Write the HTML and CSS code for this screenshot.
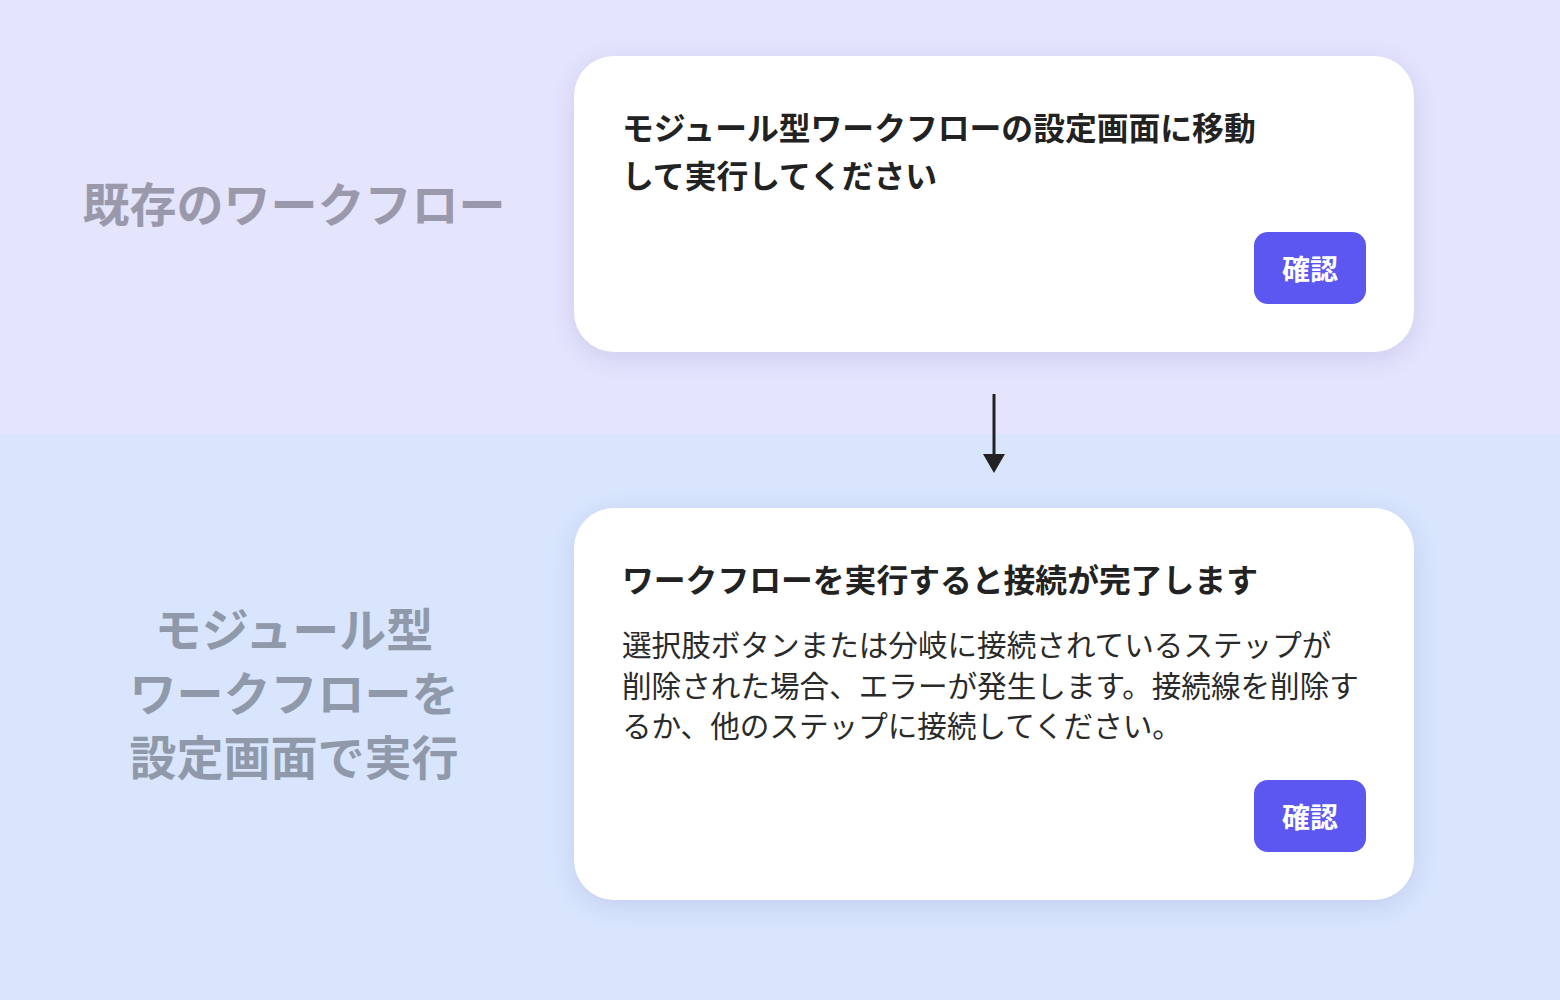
FILE: index.html
```html
<!DOCTYPE html>
<html lang="ja">
<head>
<meta charset="utf-8">
<title>ワークフロー</title>
<link rel="stylesheet" href="styles.css">
</head>
<body>
<main class="page">
  <section class="row">
    <div class="label label-top">既存のワークフロー</div>
    <div class="card">
      <h2 class="card-title">モジュール型ワークフローの設定画面に移動<br>して実行してください</h2>
      <div class="actions"><button class="btn">確認</button></div>
    </div>
  </section>
  <div class="arrow-row">
    <svg class="arrow" width="24" height="80" viewBox="0 0 24 80">
      <line x1="12" y1="0" x2="12" y2="64" stroke="#222" stroke-width="3"/>
      <polygon points="1,60 23,60 12,79" fill="#222"/>
    </svg>
  </div>
  <section class="row row-2">
    <div class="label label-bottom">モジュール型<br>ワークフローを<br>設定画面で実行</div>
    <div class="card">
      <h2 class="card-title">ワークフローを実行すると接続が完了します</h2>
      <p class="card-body">選択肢ボタンまたは分岐に接続されているステップが<br>削除された場合、エラーが発生します。接続線を削除す<br>るか、他のステップに接続してください。</p>
      <div class="actions"><button class="btn">確認</button></div>
    </div>
  </section>
</main>
</body>
</html>
```
FILE: styles.css
```css
* { box-sizing: border-box; }
html, body { margin: 0; padding: 0; }
body {
  width: 1560px;
  height: 1000px;
  overflow: hidden;
  font-family: "Noto Sans CJK JP", "Noto Sans", sans-serif;
  background: linear-gradient(to bottom, #e4e4fd 0, #e4e4fd 434px, #d8e5fd 434px, #d8e5fd 100%);
  color: #222;
}
.page {
  padding-top: 56px;
}
.row {
  display: grid;
  grid-template-columns: 574px 840px;
  align-items: center;
}
.label {
  padding-left: 14px;
  text-align: center;
  font-weight: 700;
  font-size: 47px;
  line-height: 64px;
}
.label-top { color: #9a99ab; margin-bottom: 4px; }
.label-bottom { color: #8f99aa; margin-bottom: 26px; }
.card {
  background: #fff;
  border-radius: 40px;
  padding: 46px 48px 48px;
  box-shadow: 0 6px 24px rgba(90, 90, 170, 0.16);
}
.card-title {
  margin: 0;
  font-size: 31.8px;
  line-height: 48px;
  font-weight: 700;
  color: #222;
}
.card-body {
  margin: 22px 0 0;
  font-size: 29.6px;
  line-height: 40.5px;
  font-weight: 400;
  color: #2a2a2a;
}
.actions {
  display: flex;
  justify-content: flex-end;
  margin-top: 34px;
}
.btn {
  width: 112px;
  height: 72px;
  border: 0;
  border-radius: 14px;
  background: #5c57f0;
  color: #fff;
  font-family: inherit;
  font-size: 28px;
  font-weight: 700;
  padding: 0;
}
.arrow-row {
  display: grid;
  grid-template-columns: 574px 840px;
  margin-top: 42px;
  margin-bottom: 34px;
}
.arrow {
  grid-column: 2;
  justify-self: center;
  display: block;
}
```
